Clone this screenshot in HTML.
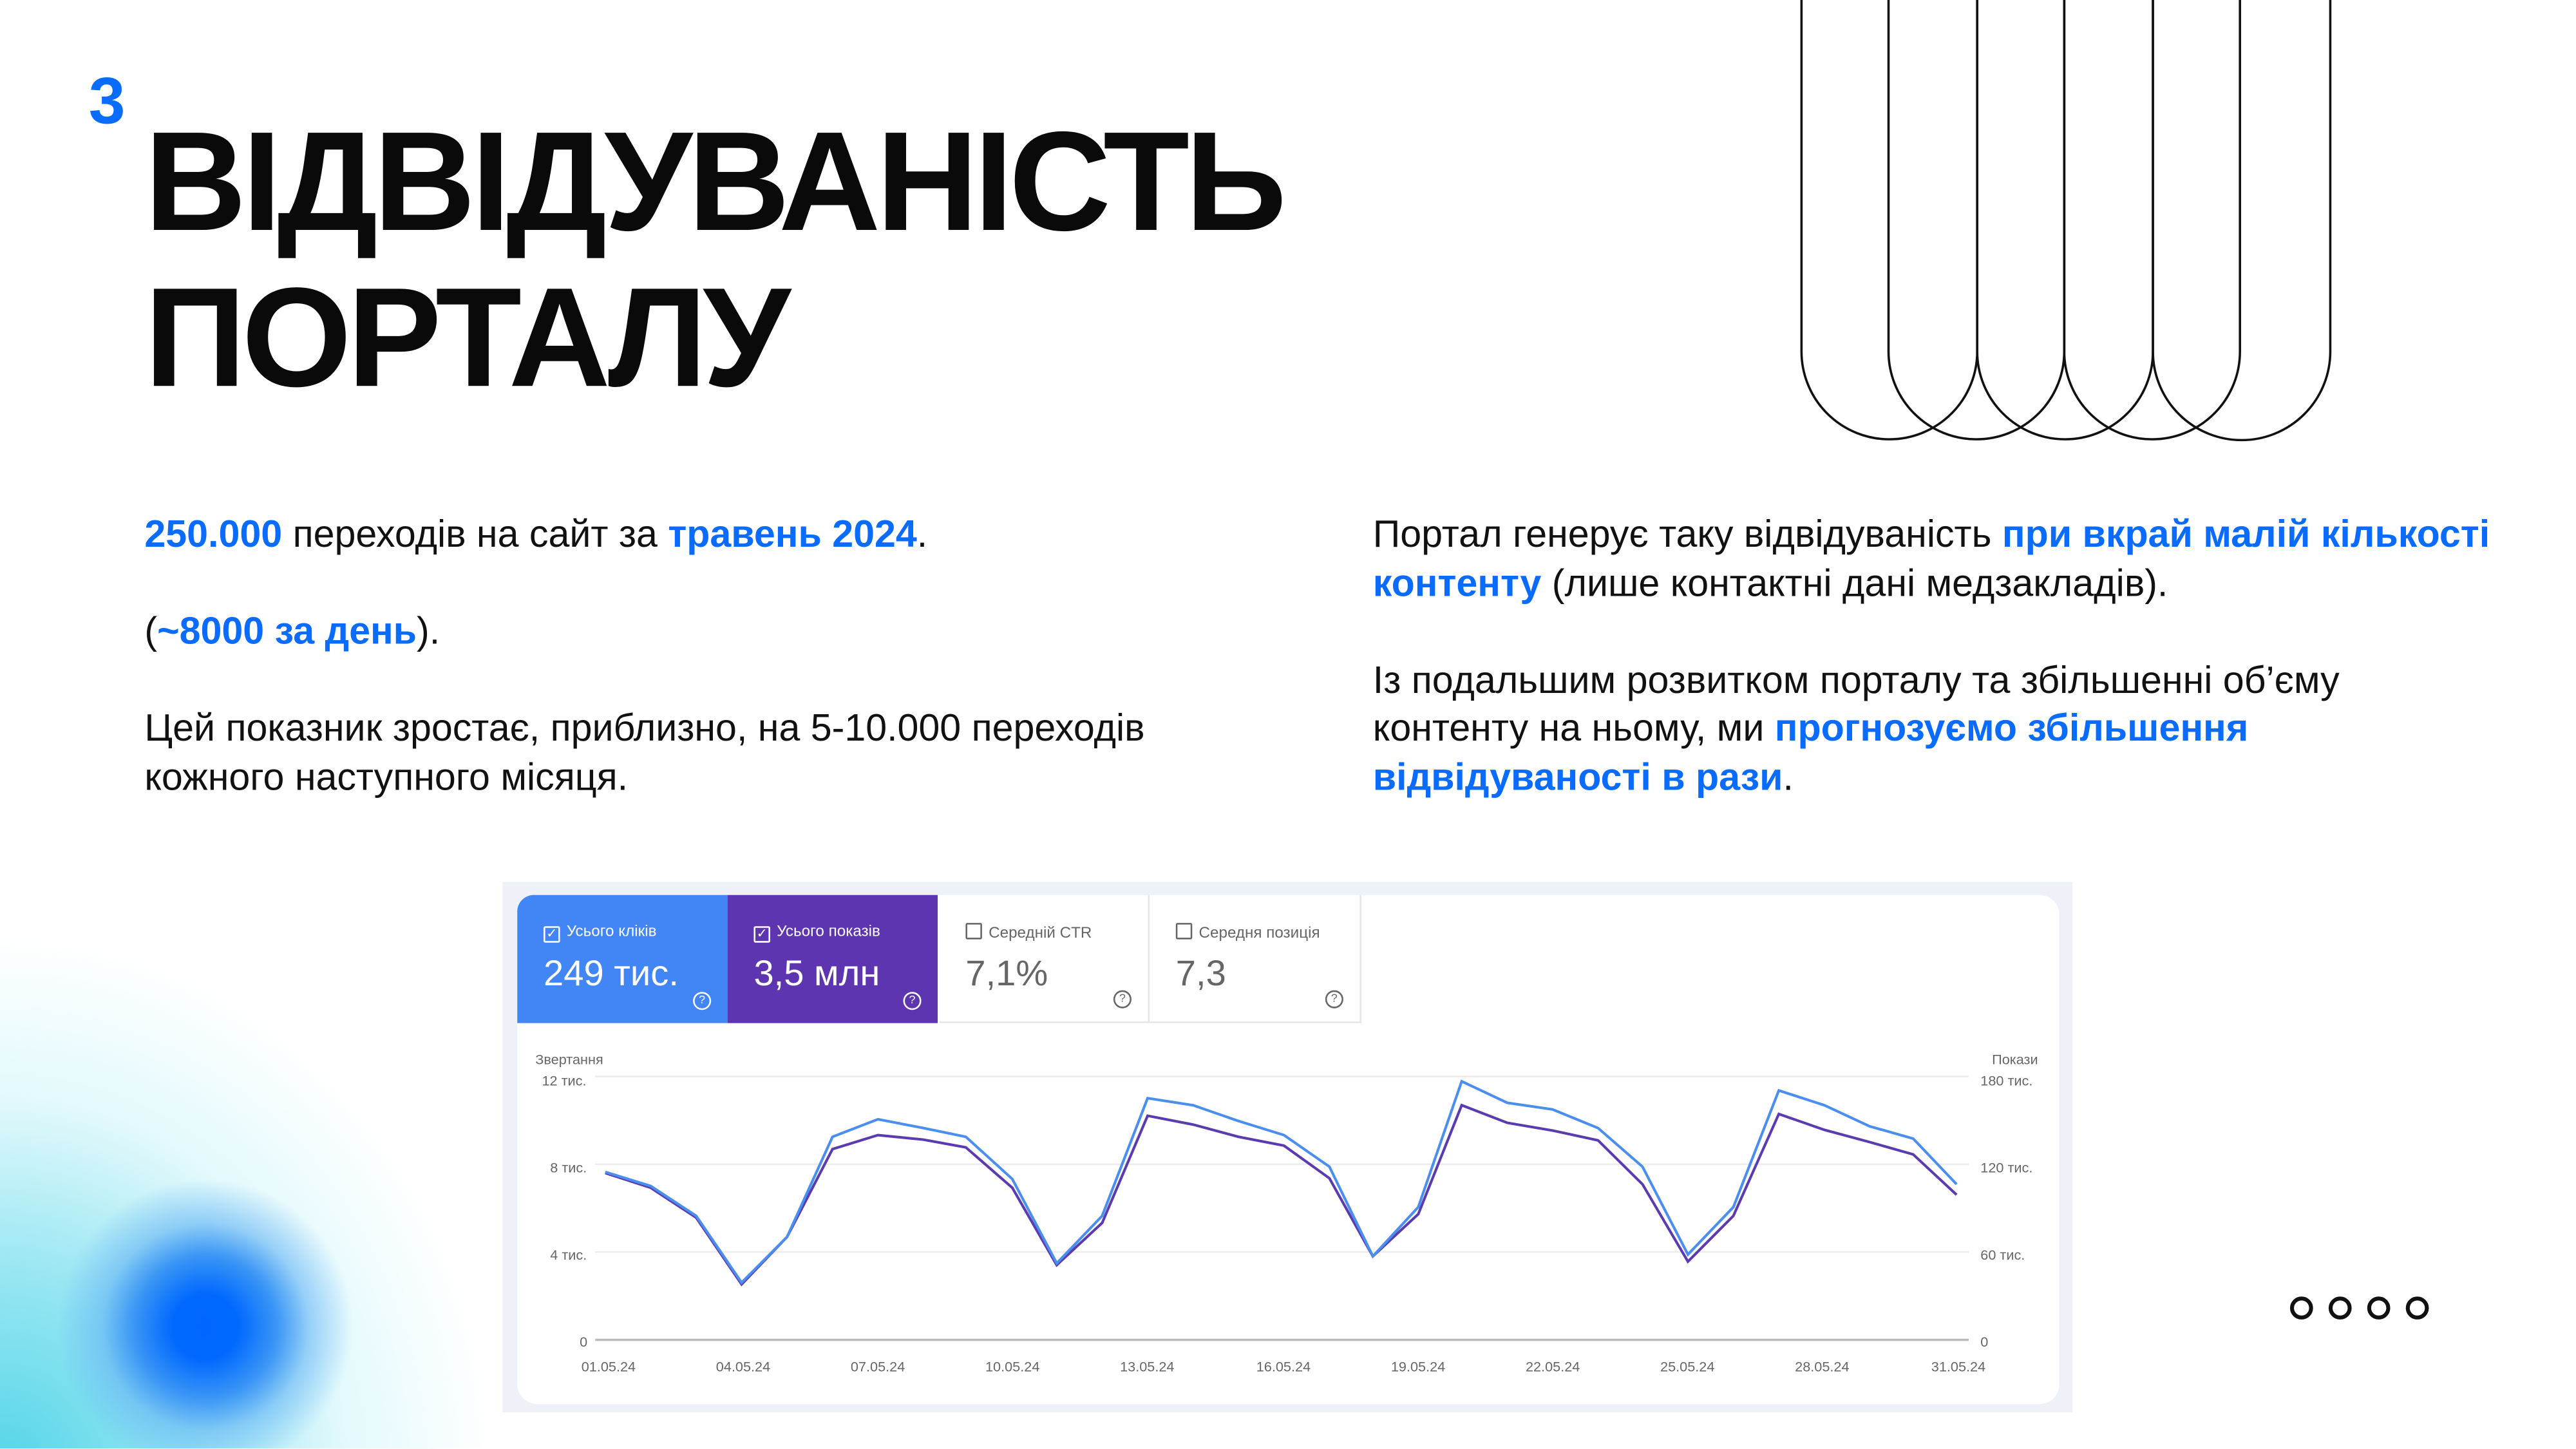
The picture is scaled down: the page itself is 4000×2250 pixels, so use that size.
<!DOCTYPE html>
<html><head><meta charset="utf-8">
<style>
html,body{margin:0;padding:0;width:4000px;height:2250px;overflow:hidden;background:#fff;}
#s{position:absolute;left:0;top:0;width:1569px;height:882.4px;transform:scale(2.55);transform-origin:0 0;font-family:"Liberation Sans","DejaVu Sans",sans-serif;color:#111;overflow:hidden;}
.abs{position:absolute;}
.b{color:#0a6cff;font-weight:bold;}
.p{font-size:23.2px;line-height:29.5px;margin:0;white-space:nowrap;}
.tab{position:absolute;top:545px;height:78px;width:128px;box-sizing:border-box;}
.tl{position:absolute;left:16px;top:17px;font-size:9.5px;}
.tv{position:absolute;left:16px;top:35px;font-size:22px;}
.cb{display:inline-block;width:8px;height:8px;border:1px solid currentColor;border-radius:1px;vertical-align:-1px;margin-right:4px;font-size:8px;line-height:8px;text-align:center;}
.q{position:absolute;right:10px;bottom:8px;width:9px;height:9px;border:1px solid currentColor;border-radius:50%;font-size:7px;line-height:9px;text-align:center;}
.ax{position:absolute;font-size:8.5px;color:#666;}
</style></head><body>
<div id="s">
<div class="abs" style="left:0;top:500px;width:300px;height:382px;background:radial-gradient(ellipse 300px 330px at 0px 400px, rgba(70,210,230,0.95) 0%, rgba(90,215,235,0.6) 40%, rgba(160,235,245,0.3) 70%, rgba(255,255,255,0) 100%);"></div>
<div class="abs" style="left:0;top:658px;width:275px;height:224px;background:radial-gradient(circle 90px at 125px 150px, #0066ff 0%, #0068ff 22%, #3a95f5 48%, rgba(100,180,245,0.6) 70%, rgba(160,220,245,0) 100%);"></div>

<div class="abs b" style="left:54px;top:40px;font-size:40px;">3</div>
<div class="abs" style="left:88px;top:64px;font-size:86px;font-weight:bold;line-height:95px;letter-spacing:-2.6px;color:#0a0a0a;">ВІДВІДУВАНІСТЬ<br>ПОРТАЛУ</div>

<svg class="abs" style="left:0;top:0" width="1569" height="300" viewBox="0 0 1569 300">
<g fill="none" stroke="#111" stroke-width="1.4">
<path d="M1097 0V214A53.5 53.5 0 0 0 1204 214V0"/>
<path d="M1150 0V214A53.5 53.5 0 0 0 1257 214V0"/>
<path d="M1204 0V214A53.5 53.5 0 0 0 1311 214V0"/>
<path d="M1257 0V214A53.5 53.5 0 0 0 1364 214V0"/>
<path d="M1311 0V214A54 54 0 0 0 1419 214V0"/>
</g></svg>

<div class="abs" style="left:88px;top:311px;">
<p class="p"><span class="b">250.000</span> переходів на сайт за <span class="b">травень 2024</span>.</p>
<p class="p" style="margin-top:29.5px">(<span class="b">~8000 за день</span>).</p>
<p class="p" style="margin-top:29.5px">Цей показник зростає, приблизно, на 5-10.000 переходів<br>кожного наступного місяця.</p>
</div>
<div class="abs" style="left:836px;top:311px;">
<p class="p">Портал генерує таку відвідуваність <span class="b">при вкрай малій кількості</span><br><span class="b">контенту</span> (лише контактні дані медзакладів).</p>
<p class="p" style="margin-top:29.5px">Із подальшим розвитком порталу та збільшенні об’єму<br>контенту на ньому, ми <span class="b">прогнозуємо збільшення</span><br><span class="b">відвідуваності в рази</span>.</p>
</div>

<div class="abs" style="left:306px;top:537px;width:956px;height:323px;background:#eef1f8;"></div>
<div class="abs" style="left:315px;top:545px;width:939px;height:310px;background:#fff;border-radius:12px;overflow:hidden;"></div>
<div class="tab" style="left:315px;background:#4285f4;color:#fff;border-top-left-radius:10px;"><div class="tl"><span class="cb">✓</span>Усього кліків</div><div class="tv">249 тис.</div><div class="q">?</div></div>
<div class="tab" style="left:443px;background:#5e35b1;color:#fff;"><div class="tl"><span class="cb">✓</span>Усього показів</div><div class="tv">3,5 млн</div><div class="q">?</div></div>
<div class="tab" style="left:572px;color:#666;border-right:1px solid #e6e6e6;border-bottom:1px solid #e6e6e6;"><div class="tl"><span class="cb"></span>Середній CTR</div><div class="tv">7,1%</div><div class="q">?</div></div>
<div class="tab" style="left:700px;width:129px;color:#666;border-right:1px solid #e6e6e6;border-bottom:1px solid #e6e6e6;"><div class="tl"><span class="cb"></span>Середня позиція</div><div class="tv">7,3</div><div class="q">?</div></div>

<div class="ax" style="left:326px;top:640px;">Звертання</div>
<div class="ax" style="left:1213px;top:640px;">Покази</div>
<div class="ax" style="left:330px;top:653px;">12 тис.</div>
<div class="ax" style="left:335px;top:706px;">8 тис.</div>
<div class="ax" style="left:335px;top:759px;">4 тис.</div>
<div class="ax" style="left:353px;top:812px;">0</div>
<div class="ax" style="left:1206px;top:653px;">180 тис.</div>
<div class="ax" style="left:1206px;top:706px;">120 тис.</div>
<div class="ax" style="left:1206px;top:759px;">60 тис.</div>
<div class="ax" style="left:1206px;top:812px;">0</div>
<div class="ax" style="left:354px;top:827px;">01.05.24</div>
<div class="ax" style="left:436px;top:827px;">04.05.24</div>
<div class="ax" style="left:518px;top:827px;">07.05.24</div>
<div class="ax" style="left:600px;top:827px;">10.05.24</div>
<div class="ax" style="left:682px;top:827px;">13.05.24</div>
<div class="ax" style="left:765px;top:827px;">16.05.24</div>
<div class="ax" style="left:847px;top:827px;">19.05.24</div>
<div class="ax" style="left:929px;top:827px;">22.05.24</div>
<div class="ax" style="left:1011px;top:827px;">25.05.24</div>
<div class="ax" style="left:1093px;top:827px;">28.05.24</div>
<div class="ax" style="left:1176px;top:827px;">31.05.24</div>

<svg class="abs" style="left:304.2px;top:534.3px" width="959.4" height="331.5" viewBox="0 0 1560 1550" preserveAspectRatio="none">
<g fill="none">
<path d="M95 568H1455M95 818H1455M95 1068H1455" stroke="#ececec" stroke-width="1" vector-effect="non-scaling-stroke"/>
<path d="M95 1318H1455" stroke="#bbb" stroke-width="1.4" vector-effect="non-scaling-stroke"/>
<polyline vector-effect="non-scaling-stroke" stroke="#5b3bb0" stroke-width="1.6" points="105,843 150,885 195,970 240,1160 285,1025 330,775 375,735 420,748 462,770 508,885 552,1105 597,985 642,680 687,705 732,740 777,765 822,858 865,1080 910,960 953,650 998,700 1043,722 1088,750 1132,875 1177,1095 1222,965 1267,675 1312,720 1357,755 1400,790 1443,905"/>
<polyline vector-effect="non-scaling-stroke" stroke="#4a8ef0" stroke-width="1.6" points="105,840 150,880 195,965 240,1155 285,1025 330,740 375,690 420,715 462,740 508,860 552,1100 597,965 642,630 687,650 732,695 777,735 822,825 865,1080 910,940 953,582 998,643 1043,662 1088,715 1132,825 1177,1075 1222,940 1267,608 1312,650 1357,710 1400,745 1443,875"/>
</g></svg>

<svg class="abs" style="left:1390px;top:785px" width="95" height="24" viewBox="0 0 95 24">
<g fill="none" stroke="#111" stroke-width="2.4">
<circle cx="11.5" cy="11.5" r="5.8"/><circle cx="35" cy="11.5" r="5.8"/><circle cx="58.5" cy="11.5" r="5.8"/><circle cx="82" cy="11.5" r="5.8"/>
</g></svg>
</div>
</body></html>
